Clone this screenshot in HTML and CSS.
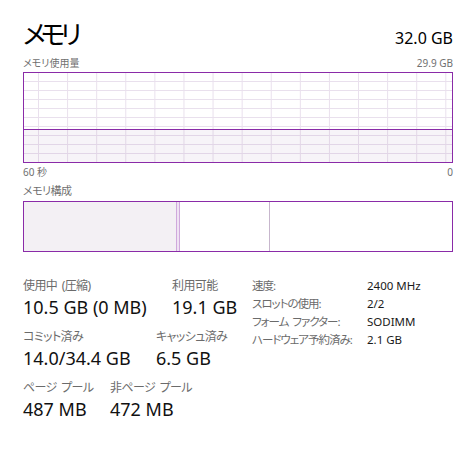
FILE: index.html
```html
<!DOCTYPE html>
<html lang="ja">
<head>
<meta charset="utf-8">
<title>メモリ</title>
<link rel="stylesheet" href="styles.css">
</head>
<body>
<div class="page">
  <header class="head">
    <h1 class="title">メモリ</h1>
    <span class="total">32.0 GB</span>
  </header>
  <div class="axis axis-top"><span>メモリ使用量</span><span>29.9 GB</span></div>
  <div class="graph"><div class="graph-fill" style="height:33px"></div></div>
  <div class="axis axis-bottom"><span>60 秒</span><span>0</span></div>
  <div class="caption">メモリ構成</div>
  <div class="comp">
    <div class="seg inuse" style="width:152px"></div>
    <div class="seg modified" style="width:4px"></div>
    <div class="seg standby" style="width:90px"></div>
    <div class="seg free"></div>
  </div>
  <div class="stats">
    <div class="stats-left">
      <div class="row">
        <div class="stat w1"><div class="label">使用中 (圧縮)</div><div class="value">10.5 GB (0 MB)</div></div>
        <div class="stat"><div class="label">利用可能</div><div class="value">19.1 GB</div></div>
      </div>
      <div class="row">
        <div class="stat w2"><div class="label">コミット済み</div><div class="value">14.0/34.4 GB</div></div>
        <div class="stat"><div class="label">キャッシュ済み</div><div class="value">6.5 GB</div></div>
      </div>
      <div class="row">
        <div class="stat w3"><div class="label">ページ プール</div><div class="value">487 MB</div></div>
        <div class="stat"><div class="label">非ページ プール</div><div class="value">472 MB</div></div>
      </div>
    </div>
    <dl class="props">
      <dt>速度:</dt><dd>2400 MHz</dd>
      <dt>スロットの使用:</dt><dd>2/2</dd>
      <dt>フォーム ファクター:</dt><dd>SODIMM</dd>
      <dt>ハードウェア予約済み:</dt><dd>2.1 GB</dd>
    </dl>
  </div>
</div>
</body>
</html>
```

FILE: styles.css
```css
html, body {
  margin: 0;
  padding: 0;
  background: #ffffff;
}

body {
  font-family: "Noto Sans", "Noto Sans CJK JP", sans-serif;
  font-feature-settings: "palt";
  color: #1a1a1a;
}

.page {
  width: 430px;
  padding: 0 18px 0 23px;
}

.head {
  display: flex;
  justify-content: space-between;
  align-items: baseline;
  padding-top: 16px;
  height: 40px;
}

.title {
  margin: 0;
  font-family: "Noto Sans CJK JP", sans-serif;
  font-feature-settings: "palt";
  font-weight: 400;
  font-size: 26px;
  line-height: 34px;
  letter-spacing: -5px;
  color: #000;
}

.total {
  font-size: 16px;
  line-height: 20px;
  color: #000;
}

.axis {
  display: flex;
  justify-content: space-between;
  font-size: 10px;
  color: #707070;
}

.axis-top {
  height: 16px;
  line-height: 14px;
}

.axis-bottom {
  height: 16px;
  line-height: 16px;
  padding-top: 1px;
}

.graph {
  box-sizing: border-box;
  height: 91px;
  border: 1px solid #8a2ba8;
  display: flex;
  flex-direction: column;
  justify-content: flex-end;
  background-color: #ffffff;
  background-image:
    linear-gradient(to right, #e9e0ed 1px, transparent 1px),
    linear-gradient(to bottom, #e9e0ed 1px, transparent 1px);
  background-size: 29.1px 100%, 100% 9px;
  background-position: 14px 0, 0 8px;
}

.graph-fill {
  box-sizing: border-box;
  border-top: 1px solid #8a2ba8;
  background: rgba(120, 60, 140, 0.06);
}

.caption {
  font-size: 11px;
  line-height: 16px;
  color: #707070;
  margin-top: 3px;
  height: 18px;
  letter-spacing: -0.5px;
}

.comp {
  box-sizing: border-box;
  display: flex;
  height: 51px;
  border: 1px solid #8a2ba8;
}

.seg {
  box-sizing: border-box;
  height: 100%;
}

.inuse {
  background: #f3f0f4;
}

.modified {
  background: #efe2f3;
  border-left: 1px solid #cfa9dc;
  border-right: 1px solid #cfa9dc;
}

.standby {
  background: #ffffff;
  border-right: 1px solid #c7b6cd;
}

.free {
  flex: 1;
  background: #ffffff;
}

.stats {
  display: flex;
  margin-top: 25px;
}

.stats-left {
  width: 229px;
  display: flex;
  flex-direction: column;
  gap: 8px;
}

.row {
  display: flex;
}

.stat {
  white-space: nowrap;
}

.stat.w1 { width: 149px; }
.stat.w2 { width: 133px; }
.stat.w3 { width: 87px; }

.label {
  font-size: 12px;
  line-height: 17px;
  letter-spacing: -0.6px;
  word-spacing: 2px;
  color: #6b6b6b;
}

.value {
  font-size: 18px;
  line-height: 26px;
  color: #111;
}

.props {
  margin: 0;
  display: grid;
  grid-template-columns: 115px auto;
  grid-auto-rows: 18px;
  font-size: 11.5px;
  line-height: 17px;
  white-space: nowrap;
}

.props dt {
  color: #6b6b6b;
  letter-spacing: -1px;
  word-spacing: 2px;
}

.props dd {
  margin: 0;
  color: #1a1a1a;
}
```
